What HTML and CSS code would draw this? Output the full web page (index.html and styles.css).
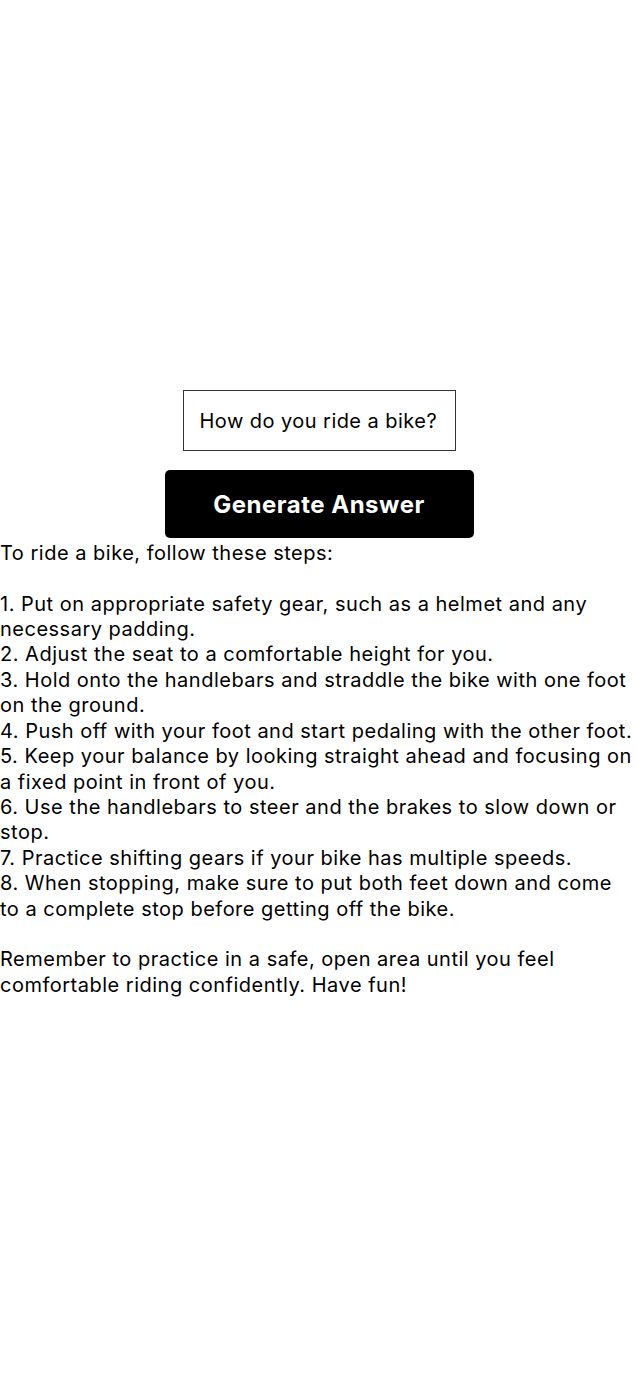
FILE: index.html
```html
<!DOCTYPE html>
<html>
<head>
<meta charset="utf-8">
<link rel="stylesheet" href="styles.css">
</head>
<body>
<main class="page">
  <input class="question" type="text" value="How do you ride a bike?">
  <button class="generate">Generate Answer</button>
  <div class="answer">To ride a bike, follow these steps:

1. Put on appropriate safety gear, such as a helmet and any necessary padding.
2. Adjust the seat to a comfortable height for you.
3. Hold onto the handlebars and straddle the bike with one foot on the ground.
4. Push off with your foot and start pedaling with the other foot.
5. Keep your balance by looking straight ahead and focusing on a fixed point in front of you.
6. Use the handlebars to steer and the brakes to slow down or stop.
7. Practice shifting gears if your bike has multiple speeds.
8. When stopping, make sure to put both feet down and come to a complete stop before getting off the bike.

Remember to practice in a safe, open area until you feel comfortable riding confidently. Have fun!</div>
</main>
</body>
</html>
```

FILE: styles.css
```css
html, body {
  margin: 0;
  padding: 0;
  background: #fff;
}
body {
  font-family: Inter, "Noto Sans", sans-serif;
  color: #000;
}
.page {
  min-height: 1374px;
  display: flex;
  flex-direction: column;
  align-items: center;
  justify-content: center;
  box-sizing: border-box;
  padding-top: 14px;
}
.question {
  width: 273px;
  height: 61px;
  box-sizing: border-box;
  border: 1px solid #333;
  padding: 2px 16px 0;
  font-family: Inter, "Noto Sans", sans-serif;
  font-size: 20px;
  letter-spacing: 0.45px;
  color: #000;
  margin: 0;
  outline: none;
}
.generate {
  margin-top: 19px;
  width: 309px;
  height: 68px;
  padding-top: 3px;
  background: #000;
  color: #fff;
  border: none;
  border-radius: 5px;
  font-family: Inter, "Noto Sans", sans-serif;
  font-size: 24px;
  font-weight: 700;
  letter-spacing: 0.5px;
  cursor: pointer;
}
.answer {
  align-self: stretch;
  box-sizing: border-box;
  padding-right: 3px;
  white-space: pre-wrap;
  font-size: 20px;
  line-height: 25.4px;
  letter-spacing: 0.5px;
  margin-top: 3px;
}
```
